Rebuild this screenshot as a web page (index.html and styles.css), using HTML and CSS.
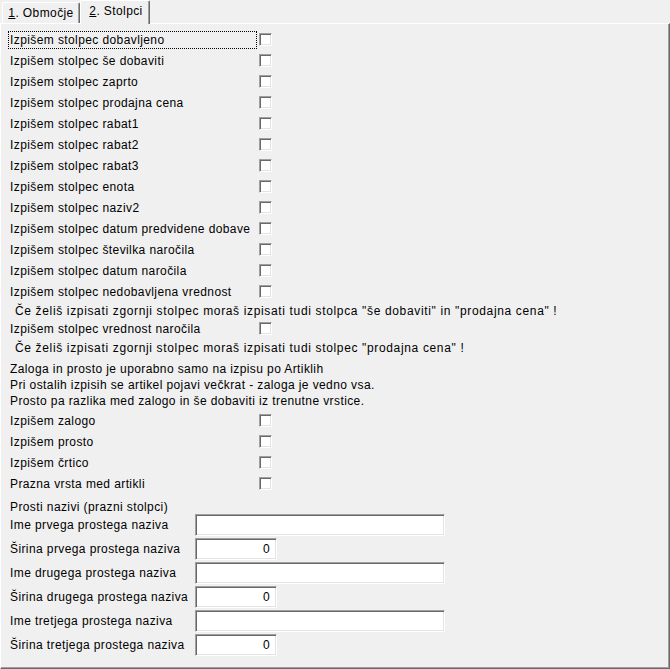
FILE: index.html
```html
<!DOCTYPE html>
<html lang="sl">
<head>
<meta charset="utf-8">
<title>Stolpci</title>
<link rel="stylesheet" href="styles.css">
</head>
<body>
<div class="window">
  <div class="tabs">
    <div class="tab"><u>1</u>. Območje</div>
    <div class="tab active"><u>2</u>. Stolpci</div>
  </div>
  <div class="panel">
    <div class="check-row"><span class="label focus">Izpišem stolpec dobavljeno</span><span class="box"></span></div>
    <div class="check-row"><span class="label">Izpišem stolpec še dobaviti</span><span class="box"></span></div>
    <div class="check-row"><span class="label">Izpišem stolpec zaprto</span><span class="box"></span></div>
    <div class="check-row"><span class="label">Izpišem stolpec prodajna cena</span><span class="box"></span></div>
    <div class="check-row"><span class="label">Izpišem stolpec rabat1</span><span class="box"></span></div>
    <div class="check-row"><span class="label">Izpišem stolpec rabat2</span><span class="box"></span></div>
    <div class="check-row"><span class="label">Izpišem stolpec rabat3</span><span class="box"></span></div>
    <div class="check-row"><span class="label">Izpišem stolpec enota</span><span class="box"></span></div>
    <div class="check-row"><span class="label">Izpišem stolpec naziv2</span><span class="box"></span></div>
    <div class="check-row"><span class="label">Izpišem stolpec datum predvidene dobave</span><span class="box"></span></div>
    <div class="check-row"><span class="label">Izpišem stolpec številka naročila</span><span class="box"></span></div>
    <div class="check-row"><span class="label">Izpišem stolpec datum naročila</span><span class="box"></span></div>
    <div class="check-row"><span class="label">Izpišem stolpec nedobavljena vrednost</span><span class="box"></span></div>
    <div class="note">Če želiš izpisati zgornji stolpec moraš izpisati tudi stolpca "še dobaviti" in "prodajna cena" !</div>
    <div class="check-row"><span class="label">Izpišem stolpec vrednost naročila</span><span class="box"></span></div>
    <div class="note">Če želiš izpisati zgornji stolpec moraš izpisati tudi stolpec "prodajna cena" !</div>

    <div class="info">
      <div class="line">Zaloga in prosto je uporabno samo na izpisu po Artiklih</div>
      <div class="line">Pri ostalih izpisih se artikel pojavi večkrat - zaloga je vedno vsa.</div>
      <div class="line">Prosto pa razlika med zalogo in še dobaviti iz trenutne vrstice.</div>
    </div>
    <div class="check-row"><span class="label">Izpišem zalogo</span><span class="box"></span></div>
    <div class="check-row"><span class="label">Izpišem prosto</span><span class="box"></span></div>
    <div class="check-row"><span class="label">Izpišem črtico</span><span class="box"></span></div>
    <div class="check-row"><span class="label">Prazna vrsta med artikli</span><span class="box"></span></div>

    <div class="section-title">Prosti nazivi (prazni stolpci)</div>
    <div class="field-row"><span class="field-label">Ime prvega prostega naziva</span><span class="input wide"></span></div>
    <div class="field-row"><span class="field-label">Širina prvega prostega naziva</span><span class="input narrow">0</span></div>
    <div class="field-row"><span class="field-label">Ime drugega prostega naziva</span><span class="input wide"></span></div>
    <div class="field-row"><span class="field-label">Širina drugega prostega naziva</span><span class="input narrow">0</span></div>
    <div class="field-row"><span class="field-label">Ime tretjega prostega naziva</span><span class="input wide"></span></div>
    <div class="field-row"><span class="field-label">Širina tretjega prostega naziva</span><span class="input narrow">0</span></div>
  </div>
</div>
</body>
</html>
```

FILE: styles.css
```css
html, body {
  margin: 0;
  padding: 0;
  background: #f0f0f0;
}

body {
  font-family: "Liberation Sans", Arial, sans-serif;
  font-size: 12px;
  letter-spacing: 0.4px;
  color: #000;
}

.window {
  width: 670px;
  height: 669px;
  display: flex;
  flex-direction: column;
}

/* tab strip */
.tabs {
  height: 23px;
  display: flex;
  align-items: flex-end;
  padding-left: 2px;
  position: relative;
  z-index: 1;
}

.tab {
  box-sizing: border-box;
  height: 21px;
  width: 78px;
  border-top: 1px solid #fff;
  border-left: 1px solid #fff;
  border-right: 1px solid #696969;
  box-shadow: inset -1px 0 #a0a0a0;
  border-radius: 2px 2px 0 0;
  display: flex;
  justify-content: center;
  padding-top: 3px;
  line-height: 14px;
  background: #f0f0f0;
}

.tab.active {
  height: 24px;
  width: 70px;
  margin-bottom: -1px;
  padding-top: 3px;
  padding-left: 2px;
}

/* page body */
.panel {
  flex: 1;
  box-sizing: border-box;
  border-top: 1px solid #fff;
  border-left: 1px solid #fff;
  border-right: 1px solid #696969;
  border-bottom: 1px solid #696969;
  box-shadow: inset -1px -1px #a0a0a0;
  padding: 6px 0 0 7px;
  display: flex;
  flex-direction: column;
}

.check-row {
  height: 21px;
  display: flex;
  align-items: flex-start;
}

.label {
  box-sizing: border-box;
  width: 249px;
  height: 18px;
  margin-top: 1px;
  padding-left: 1px;
  line-height: 16px;
  border: 1px solid transparent;
  white-space: nowrap;
}

.label.focus {
  border: 1px dotted #000;
}

.box {
  box-sizing: border-box;
  width: 13px;
  height: 13px;
  margin: 3px 0 0 2px;
  background: #fff;
  border-top: 1px solid #a0a0a0;
  border-left: 1px solid #a0a0a0;
  border-right: 1px solid #fff;
  border-bottom: 1px solid #fff;
  box-shadow: inset 1px 1px #696969, inset -1px -1px #e3e3e3;
}

/* hint lines under a checkbox, set a little looser */
.note {
  height: 16px;
  line-height: 16px;
  padding-left: 7px;
  letter-spacing: 0.65px;
  white-space: nowrap;
}

.info {
  margin-top: 5px;
  margin-bottom: 2px;
  padding-left: 2px;
}

.line {
  height: 16px;
  line-height: 16px;
  white-space: nowrap;
}

.section-title {
  margin-top: 4px;
  height: 15px;
  line-height: 16px;
  padding-left: 2px;
}

.field-row {
  height: 22px;
  margin-bottom: 2px;
  display: flex;
  align-items: center;
}

.field-label {
  width: 185px;
  padding-left: 2px;
  white-space: nowrap;
}

.input {
  box-sizing: border-box;
  height: 22px;
  background: #fff;
  border-top: 1px solid #a0a0a0;
  border-left: 1px solid #a0a0a0;
  border-right: 1px solid #fff;
  border-bottom: 1px solid #fff;
  box-shadow: inset 1px 1px #696969, inset -1px -1px #e3e3e3;
  line-height: 20px;
  text-align: right;
  padding-right: 6px;
}

.input.wide {
  width: 250px;
}

.input.narrow {
  width: 82px;
}
```
